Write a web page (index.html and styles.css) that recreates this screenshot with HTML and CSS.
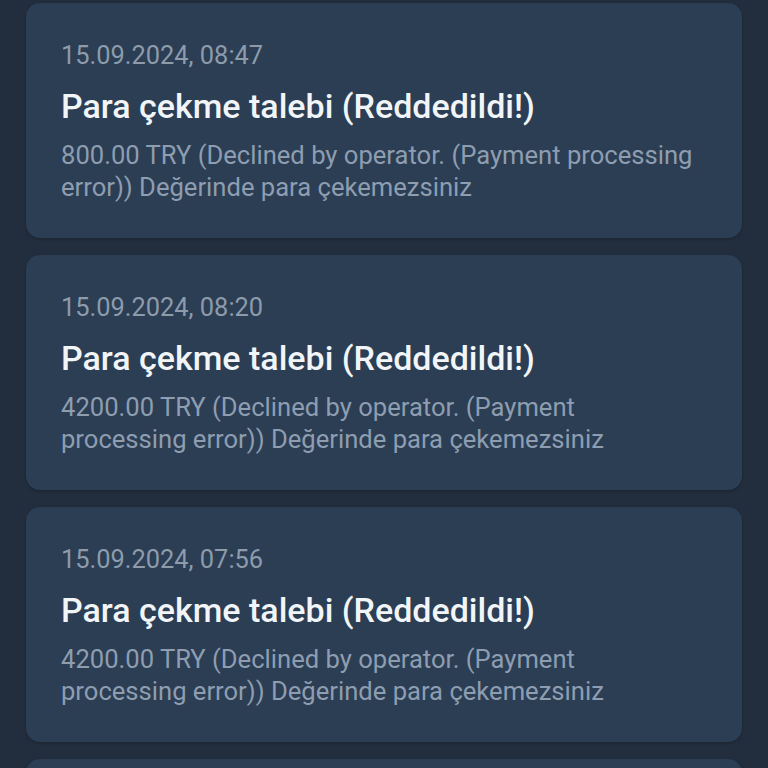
FILE: index.html
```html
<!DOCTYPE html>
<html lang="tr">
<head>
<meta charset="utf-8">
<link rel="stylesheet" href="styles.css">
</head>
<body>
<div class="list">
  <div class="card">
    <div class="date">15.09.2024, 08:47</div>
    <div class="title">Para çekme talebi (Reddedildi!)</div>
    <div class="desc">800.00 TRY (Declined by operator. (Payment processing error)) Değerinde para çekemezsiniz</div>
  </div>
  <div class="card">
    <div class="date">15.09.2024, 08:20</div>
    <div class="title">Para çekme talebi (Reddedildi!)</div>
    <div class="desc">4200.00 TRY (Declined by operator. (Payment processing error)) Değerinde para çekemezsiniz</div>
  </div>
  <div class="card">
    <div class="date">15.09.2024, 07:56</div>
    <div class="title">Para çekme talebi (Reddedildi!)</div>
    <div class="desc">4200.00 TRY (Declined by operator. (Payment processing error)) Değerinde para çekemezsiniz</div>
  </div>
  <div class="card">
    <div class="date">15.09.2024, 07:30</div>
    <div class="title">Para çekme talebi (Reddedildi!)</div>
    <div class="desc">4200.00 TRY (Declined by operator. (Payment processing error)) Değerinde para çekemezsiniz</div>
  </div>
</div>
</body>
</html>
```
FILE: styles.css
```css
html, body {
  margin: 0;
  padding: 0;
  background: #222e3e;
  height: 768px;
  overflow: hidden;
}
body {
  font-family: Roboto, "Noto Sans", sans-serif;
}
.list {
  display: flex;
  flex-direction: column;
  gap: 17px;
  padding: 3px 26px 0 26px;
}
.card {
  background: #2b3e54;
  border-radius: 14px;
  padding: 37px 40px 35px 35px;
  box-shadow: 0 1px 3px rgba(0,0,0,0.25);
}
.date {
  font-size: 25.4px;
  line-height: 30px;
  color: #8d9bab;
}
.title {
  margin-top: 16px;
  font-size: 34px;
  line-height: 40px;
  font-weight: 500;
  color: #f2f5f8;
}
.desc {
  margin-top: 13px;
  font-size: 25.6px;
  line-height: 32px;
  color: #8e9db0;
}
```
